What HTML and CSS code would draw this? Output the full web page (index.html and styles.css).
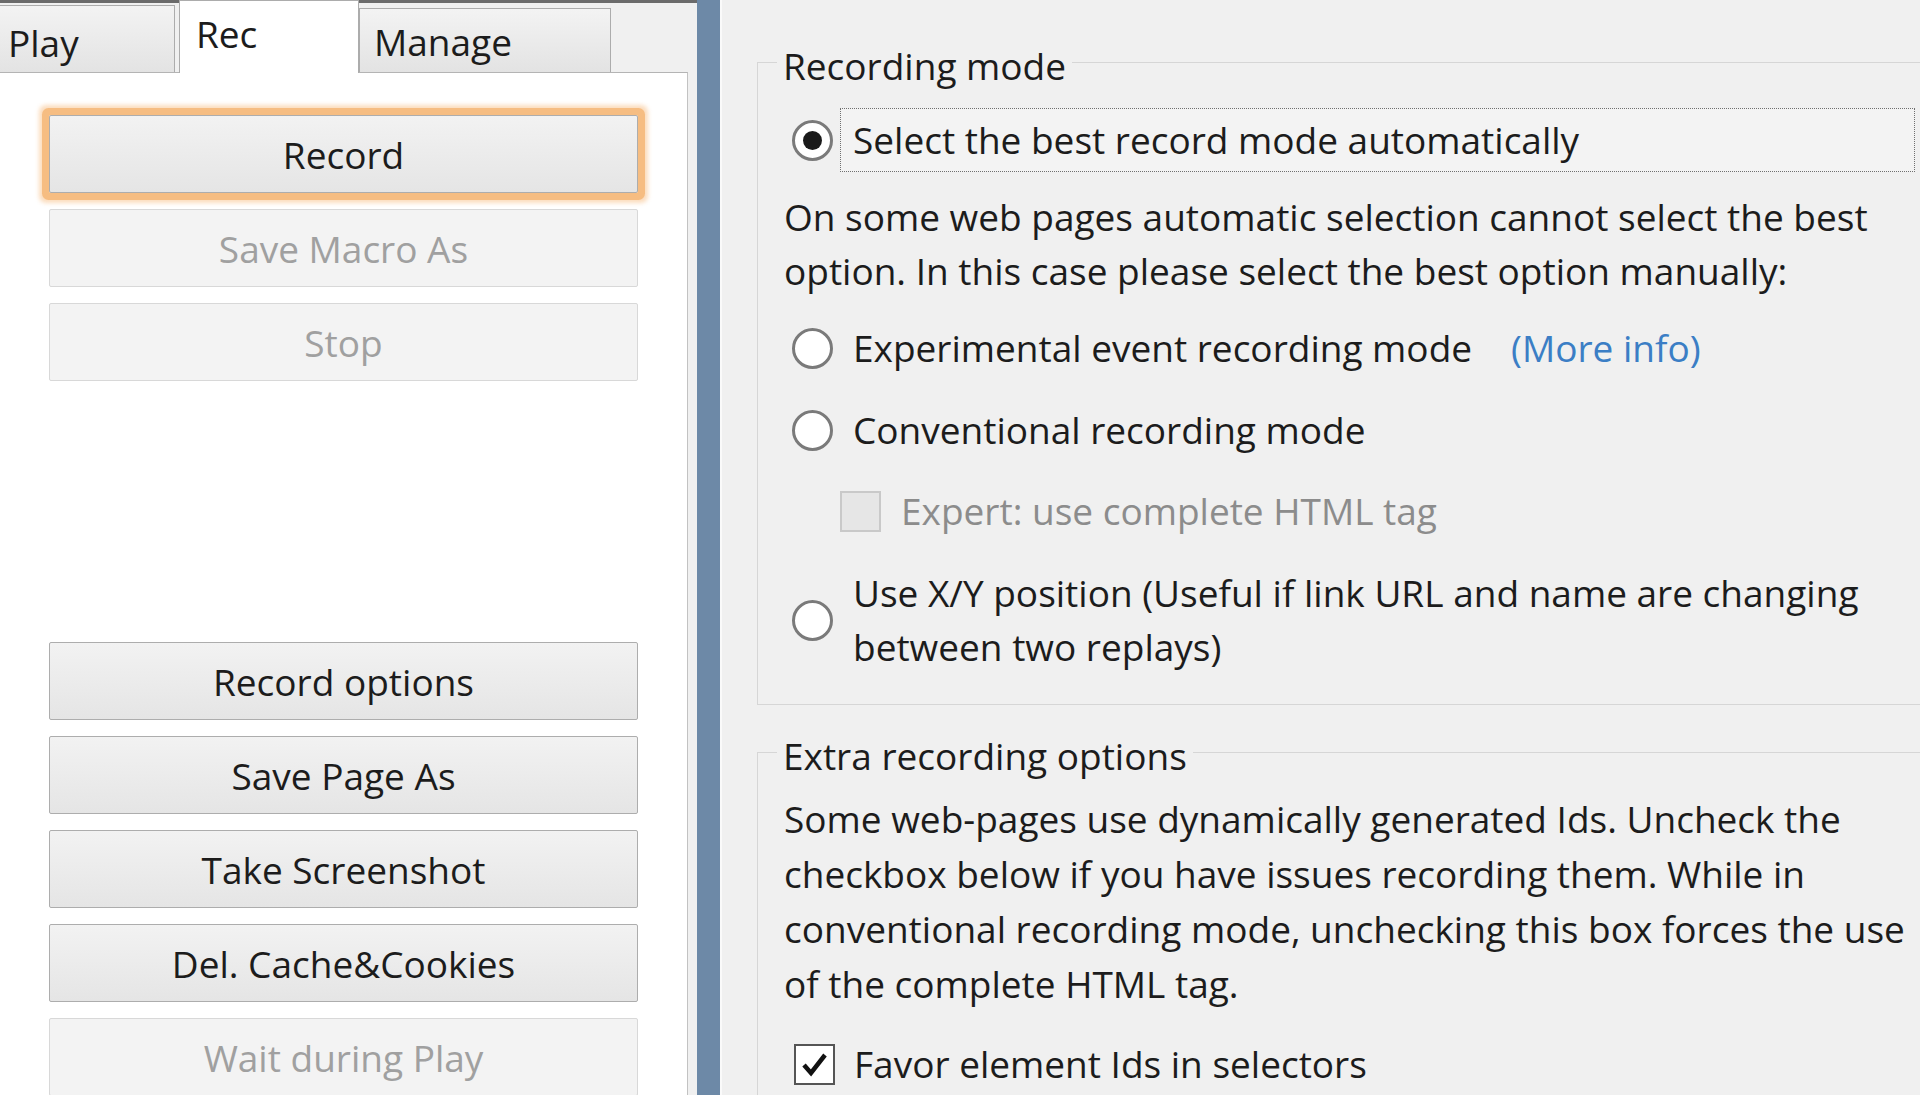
FILE: index.html
```html
<!DOCTYPE html>
<html lang="en">
<head>
    <meta charset="UTF-8">
    <meta name="viewport" content="width=device-width, initial-scale=1.0">
    <title>Record Options</title>
    <link rel="stylesheet" href="styles.css">
</head>
<body>

<div class="window">
    <!-- Left side: tabs and command buttons -->
    <div class="left">
        <div class="tabs">
            <div class="tab tab-play">Play</div>
            <div class="tab tab-rec">Rec</div>
            <div class="tab tab-manage">Manage</div>
        </div>
        <div class="panel">
            <button class="btn btn-default">Record</button>
            <button class="btn" disabled>Save Macro As</button>
            <button class="btn" disabled>Stop</button>
            <button class="btn btn-gap">Record options</button>
            <button class="btn">Save Page As</button>
            <button class="btn">Take Screenshot</button>
            <button class="btn">Del. Cache&amp;Cookies</button>
            <button class="btn" disabled>Wait during Play</button>
        </div>
    </div>

    <div class="splitter"></div>

    <!-- Right side: recording options -->
    <div class="right">
        <div class="group group-mode">
            <div class="group-title">Recording mode</div>
            <div class="option option-auto">
                <span class="radio checked"></span>
                <span class="focus-label">Select the best record mode automatically</span>
            </div>
            <p class="note">On some web pages automatic selection cannot select the best<br>option. In this case please select the best option manually:</p>
            <div class="option option-exp">
                <span class="radio"></span>
                <span>Experimental event recording mode</span>
                <a class="link">(More info)</a>
            </div>
            <div class="option option-conv">
                <span class="radio"></span>
                <span>Conventional recording mode</span>
            </div>
            <div class="option option-expert">
                <span class="check"></span>
                <span>Expert: use complete HTML tag</span>
            </div>
            <div class="option option-xy">
                <span class="radio"></span>
                <span>Use X/Y position (Useful if link URL and name are changing<br>between two replays)</span>
            </div>
        </div>

        <div class="group group-extra">
            <div class="group-title">Extra recording options</div>
            <p class="note note-extra">Some web-pages use dynamically generated Ids. Uncheck the<br>checkbox below if you have issues recording them. While in<br>conventional recording mode, unchecking this box forces the use<br>of the complete HTML tag.</p>
            <div class="option option-favor">
                <span class="check checked">
                    <svg width="37" height="37" viewBox="0 0 37 37"><path d="M8 19 L15 27 L29 9" fill="none" stroke="#111" stroke-width="4.5"/></svg>
                </span>
                <span>Favor element Ids in selectors</span>
            </div>
        </div>
    </div>
</div>

</body>
</html>
```

FILE: styles.css
```css
/* Page */
body {
    margin: 0;
    background-color: #f0f0f0;
    font-family: "Open Sans", "Noto Sans", sans-serif;
    font-size: 37px;
    color: #1c1c1c;
    overflow: hidden;
}
.window {
    display: flex;
    height: 1095px;
    overflow: hidden;
}

/* Left side */
.left {
    width: 697px;
    flex-shrink: 0;
    display: flex;
    flex-direction: column;
}
.tabs {
    display: flex;
    align-items: flex-end;
    height: 72px;
    box-sizing: border-box;
    border-top: 3px solid #6b6b6b;
}
.tab {
    box-sizing: border-box;
    height: 64px;
    padding: 6px 14px 0;
    border: 1px solid #acacac;
    border-bottom: none;
    background: linear-gradient(#f3f3f3, #e3e3e3);
    line-height: 54px;
    white-space: nowrap;
}
.tab-play {
    width: 176px;
    height: 67px;
    margin-left: -1px;
    padding: 10px 8px 0;
}
.tab-rec {
    position: relative;
    z-index: 1;
    width: 180px;
    height: 73px;
    margin: 0 0 -1px 4px;
    padding: 6px 16px 0;
    background: #fff;
}
.tab-manage {
    width: 252px;
}
.panel {
    flex: 1;
    display: flex;
    flex-direction: column;
    gap: 16px;
    margin-right: 9px;
    padding: 42px 49px 0;
    background-color: #fff;
    border-top: 1px solid #b4b4b4;
    border-right: 1px solid #c2c2c2;
    overflow: hidden;
}
.btn {
    flex-shrink: 0;
    height: 78px;
    padding: 0;
    font-family: inherit;
    font-size: 37px;
    color: #1c1c1c;
    background: linear-gradient(#f2f2f2, #e5e5e5);
    border: 1px solid #adadad;
    border-radius: 2px;
}
.btn:disabled {
    color: #a0a0a0;
    background: #f3f3f3;
    border-color: #d8d8d8;
}
.btn-default {
    box-shadow: 0 0 0 7px #f6bd82, 0 0 4px 10px rgba(246, 178, 108, 0.45);
}
.btn-gap {
    margin-top: 245px;
}
.splitter {
    width: 23px;
    flex-shrink: 0;
    background-color: #6d89a7;
}

/* Right side */
.right {
    flex: 1;
    min-width: 0;
    padding: 62px 0 0 35px;
    border-left: 2px solid #fafafa;
    line-height: 54px;
}
.group {
    margin-right: -40px;
    padding: 0 44px 30px 26px;
    border: 1px solid #d6d6d6;
}
.group-title {
    width: fit-content;
    margin: -24px 0 0 -7px;
    padding: 0 6px;
    background-color: #f0f0f0;
}
.option {
    display: flex;
    align-items: center;
    margin-left: 8px;
    white-space: nowrap;
}
.radio {
    width: 41px;
    height: 41px;
    box-sizing: border-box;
    flex-shrink: 0;
    display: flex;
    align-items: center;
    justify-content: center;
    margin-right: 20px;
    border: 3px solid #7a7a7a;
    border-radius: 50%;
    background-color: #fff;
}
.radio.checked::after {
    content: "";
    width: 19px;
    height: 19px;
    border-radius: 50%;
    background-color: #1a1a1a;
}
.check {
    width: 41px;
    height: 41px;
    box-sizing: border-box;
    flex-shrink: 0;
    display: flex;
    align-items: center;
    justify-content: center;
    margin-right: 20px;
    border: 2px solid #c9c9c9;
    background-color: #e6e6e6;
}
.check.checked {
    border-color: #555;
    background-color: #fff;
    margin-right: 19px;
}
.option-auto {
    margin-top: 15px;
}
.option-auto .radio {
    margin-right: 7px;
}
.focus-label {
    flex: 1;
    padding: 4px 12px;
    border: 1px dotted #6f6f6f;
    background-color: #f3f3f3;
}
.note {
    margin: 18px 0 0;
}
.option-exp {
    margin-top: 23px;
}
.link {
    margin-left: 39px;
    color: #3b7ec5;
    cursor: pointer;
}
.option-conv {
    margin-top: 28px;
}
.option-expert {
    margin: 27px 0 0 56px;
    color: #8c8c8c;
}
.option-xy {
    margin-top: 28px;
}
.group-extra {
    margin-top: 47px;
}
.note-extra {
    margin-top: 8px;
    line-height: 55px;
}
.option-favor {
    margin: 26px 0 0 10px;
}
```
